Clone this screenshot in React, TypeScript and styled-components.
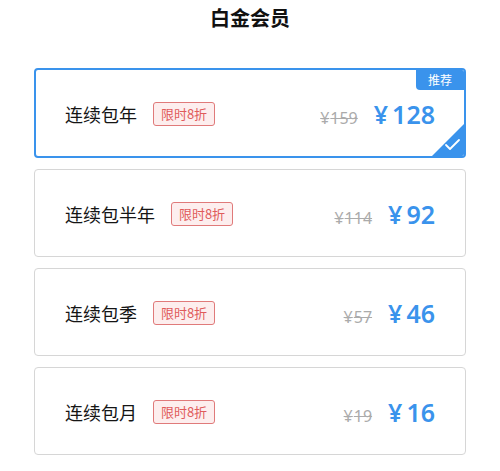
import React from 'react';
import styled, {createGlobalStyle} from 'styled-components';

const GlobalStyle = createGlobalStyle`
  body {
    margin: 0;
    background: #fff;
    font-family: "Noto Sans CJK SC", "Noto Sans", sans-serif;
  }
`;

const BLUE = '#3a93ec';

const Page = styled.div`
  width: 500px;
  height: 471px;
  overflow: hidden;
`;

const Title = styled.h1`
  margin: 0;
  height: 36px;
  line-height: 36px;
  text-align: center;
  font-size: 20px;
  font-weight: 700;
  color: #111;
`;

const PlanList = styled.div`
  display: flex;
  flex-direction: column;
  gap: 11px;
  padding: 32px 34px 0;
`;

const PlanCard = styled.div<{$selected?: boolean}>`
  position: relative;
  box-sizing: border-box;
  height: ${p => (p.$selected ? 90 : 88)}px;
  display: flex;
  align-items: center;
  padding: 2px ${p => (p.$selected ? 29 : 30)}px 0;
  border: ${p => (p.$selected ? `2px solid ${BLUE}` : '1px solid #d6d6d6')};
  border-radius: 4px;
  overflow: hidden;
  background: #fff;
`;

const PlanName = styled.span`
  font-size: 18px;
  color: #151515;
`;

const Discount = styled.span`
  box-sizing: border-box;
  margin-left: 16px;
  width: 62px;
  height: 24px;
  line-height: 22px;
  text-align: center;
  font-size: 13px;
  color: #e05b5b;
  background: #fdeeee;
  border: 1px solid #e07a7a;
  border-radius: 3px;
`;

const Prices = styled.div`
  margin-left: auto;
  display: flex;
  align-items: baseline;
  gap: 16px;
  font-family: "Noto Sans", "Noto Sans CJK SC", sans-serif;
`;

const OldPrice = styled.span`
  font-size: 16px;
  color: #ababab;
  text-decoration: line-through;
`;

const NewPrice = styled.span`
  font-size: 25px;
  font-weight: 600;
  color: ${BLUE};
`;

const Yen = styled.span<{$gap: number}>`
  margin-right: ${p => p.$gap}px;
`;

const RecommendTag = styled.span`
  position: absolute;
  top: 0;
  right: 0;
  width: 48px;
  height: 20px;
  line-height: 20px;
  text-align: center;
  font-size: 12px;
  color: #fff;
  background: ${BLUE};
  border-bottom-left-radius: 4px;
`;

const CheckCorner = styled.svg`
  position: absolute;
  right: 0;
  bottom: 0;
  width: 32px;
  height: 32px;
`;

type Plan = {name: string; oldPrice: number; price: number};

const plans: Plan[] = [
  {name: '连续包年', oldPrice: 159, price: 128},
  {name: '连续包半年', oldPrice: 114, price: 92},
  {name: '连续包季', oldPrice: 57, price: 46},
  {name: '连续包月', oldPrice: 19, price: 16},
];

const App: React.FC = () => {
  return (
    <Page>
      <GlobalStyle />
      <Title>白金会员</Title>
      <PlanList>
        {plans.map((plan, i) => {
          const selected = i === 0;
          return (
            <PlanCard key={plan.name} $selected={selected}>
              <PlanName>{plan.name}</PlanName>
              <Discount>限时8折</Discount>
              <Prices>
                <OldPrice>
                  <Yen $gap={1}>¥</Yen>
                  {plan.oldPrice}
                </OldPrice>
                <NewPrice>
                  <Yen $gap={4}>¥</Yen>
                  {plan.price}
                </NewPrice>
              </Prices>
              {selected && (
                <>
                  <RecommendTag>推荐</RecommendTag>
                  <CheckCorner viewBox="0 0 32 32">
                    <polygon points="32,0 32,32 0,32" fill={BLUE} />
                    <polyline
                      points="14,21 18,25 27,16"
                      fill="none"
                      stroke="#fff"
                      strokeWidth="1.8"
                      strokeLinecap="round"
                      strokeLinejoin="round"
                    />
                  </CheckCorner>
                </>
              )}
            </PlanCard>
          );
        })}
      </PlanList>
    </Page>
  );
};

export default App;
